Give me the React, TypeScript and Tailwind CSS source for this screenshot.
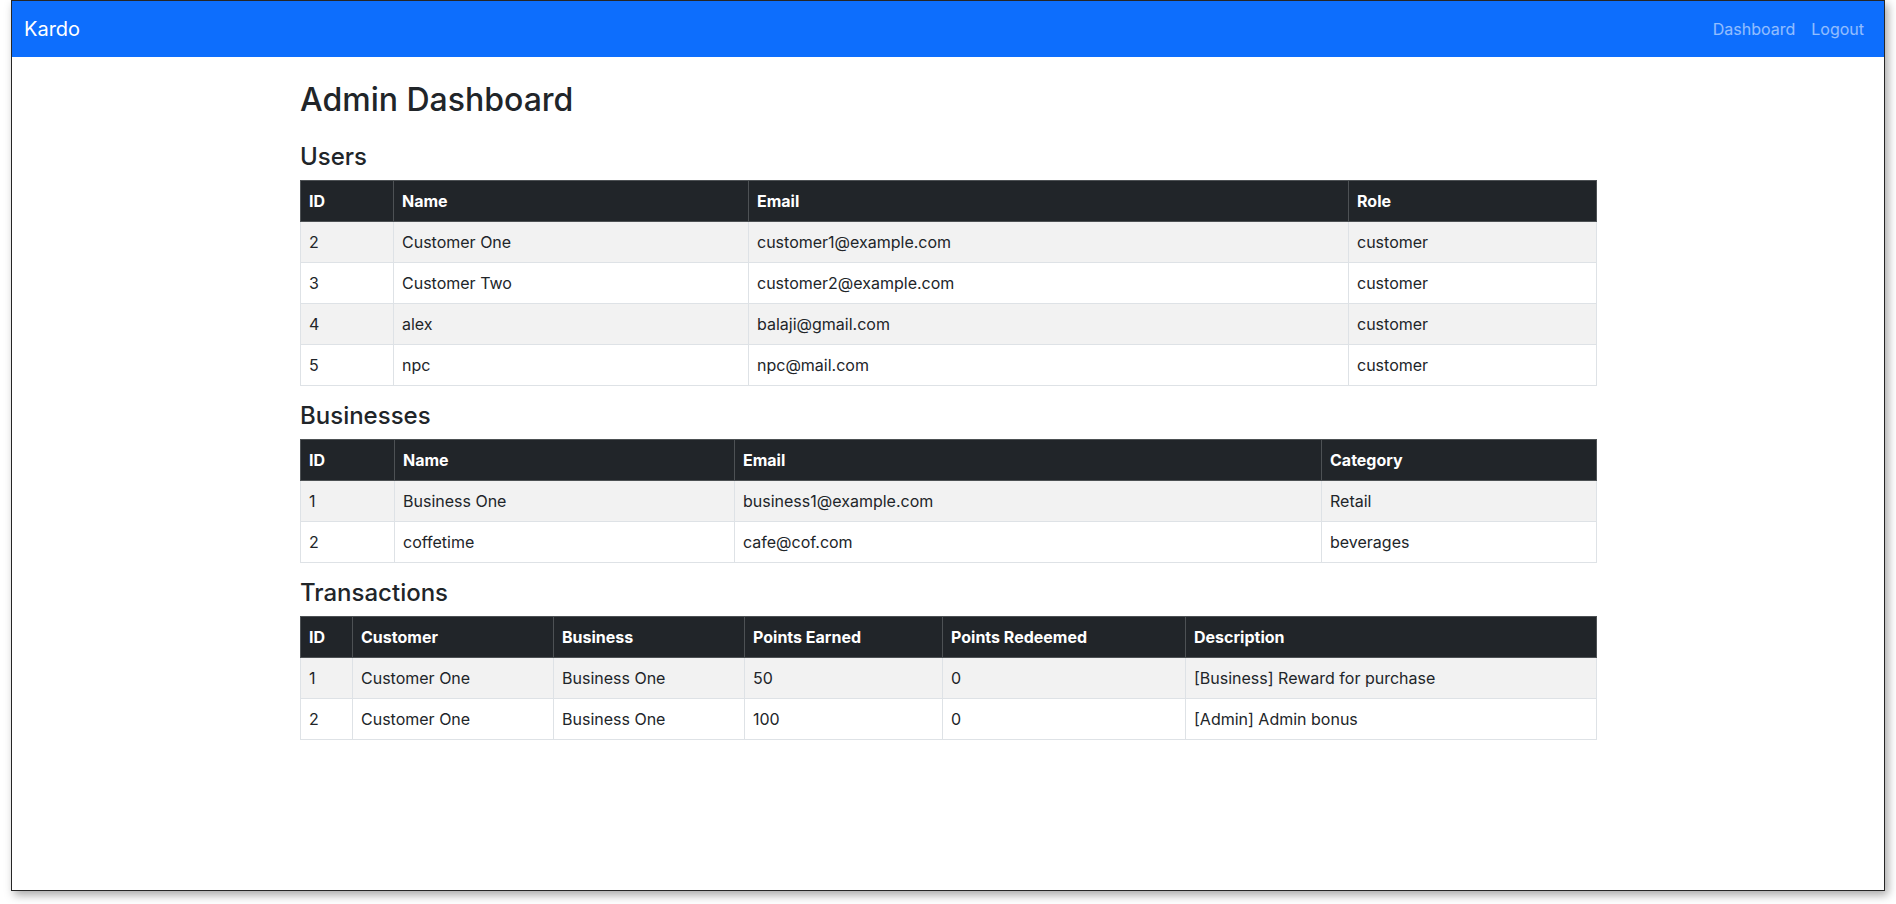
import React from "react";

type Col = { label: string; w: string };

const users = [
  ["2", "Customer One", "customer1@example.com", "customer"],
  ["3", "Customer Two", "customer2@example.com", "customer"],
  ["4", "alex", "balaji@gmail.com", "customer"],
  ["5", "npc", "npc@mail.com", "customer"],
];

const businesses = [
  ["1", "Business One", "business1@example.com", "Retail"],
  ["2", "coffetime", "cafe@cof.com", "beverages"],
];

const transactions = [
  ["1", "Customer One", "Business One", "50", "0", "[Business] Reward for purchase"],
  ["2", "Customer One", "Business One", "100", "0", "[Admin] Admin bonus"],
];

const userCols: Col[] = [
  { label: "ID", w: "w-[93px]" },
  { label: "Name", w: "w-[355px]" },
  { label: "Email", w: "w-[600px]" },
  { label: "Role", w: "w-[248px]" },
];

const businessCols: Col[] = [
  { label: "ID", w: "w-[94px]" },
  { label: "Name", w: "w-[340px]" },
  { label: "Email", w: "w-[587px]" },
  { label: "Category", w: "w-[275px]" },
];

const txCols: Col[] = [
  { label: "ID", w: "w-[52px]" },
  { label: "Customer", w: "w-[201px]" },
  { label: "Business", w: "w-[191px]" },
  { label: "Points Earned", w: "w-[198px]" },
  { label: "Points Redeemed", w: "w-[243px]" },
  { label: "Description", w: "w-[411px]" },
];

const DataTable: React.FC<{ cols: Col[]; rows: string[][] }> = ({ cols, rows }) => {
  return (
    <table className="w-full table-fixed border-collapse mb-4 text-[16px] leading-6 text-[#212529]">
      <thead>
        <tr className="bg-[#212529] text-white">
          {cols.map((c) => (
            <th
              key={c.label}
              className={`${c.w} border border-[#4d5154] px-2 py-2 text-left font-bold`}
            >
              {c.label}
            </th>
          ))}
        </tr>
      </thead>
      <tbody>
        {rows.map((r, i) => (
          <tr key={i} className={i % 2 === 0 ? "bg-[#f2f2f2]" : "bg-white"}>
            {r.map((cell, j) => (
              <td key={j} className="border border-[#dee2e6] px-2 py-2">
                {cell}
              </td>
            ))}
          </tr>
        ))}
      </tbody>
    </table>
  );
};

export default function App() {
  return (
    <div
      className="w-full h-[904px] bg-white overflow-hidden"
      style={{ fontFamily: "Inter, 'Noto Sans', sans-serif" }}
    >
      <div className="ml-[11px] w-[1874px] h-[891px] border border-[#262626] bg-white shadow-[3px_4px_9px_rgba(0,0,0,0.35)]">
        {/* navbar */}
        <nav className="h-[56px] bg-[#0d6efd] px-3 flex items-center justify-between">
          <span className="text-white text-[20px] leading-[30px]">Kardo</span>
          <div className="flex">
            <a className="px-2 text-[16px] text-white/55">Dashboard</a>
            <a className="px-2 text-[16px] text-white/55">Logout</a>
          </div>
        </nav>

        <main className="w-[1320px] mx-auto px-3 pt-6 text-[#212529]">
          <h1 className="text-[32px] leading-[1.2] font-medium mb-2">Admin Dashboard</h1>

          <h4 className="text-[24px] leading-[1.2] font-medium mt-6 mb-2">Users</h4>
          <DataTable cols={userCols} rows={users} />

          <h4 className="text-[24px] leading-[1.2] font-medium mb-2">Businesses</h4>
          <DataTable cols={businessCols} rows={businesses} />

          <h4 className="text-[24px] leading-[1.2] font-medium mb-2">Transactions</h4>
          <DataTable cols={txCols} rows={transactions} />
        </main>
      </div>
    </div>
  );
}
